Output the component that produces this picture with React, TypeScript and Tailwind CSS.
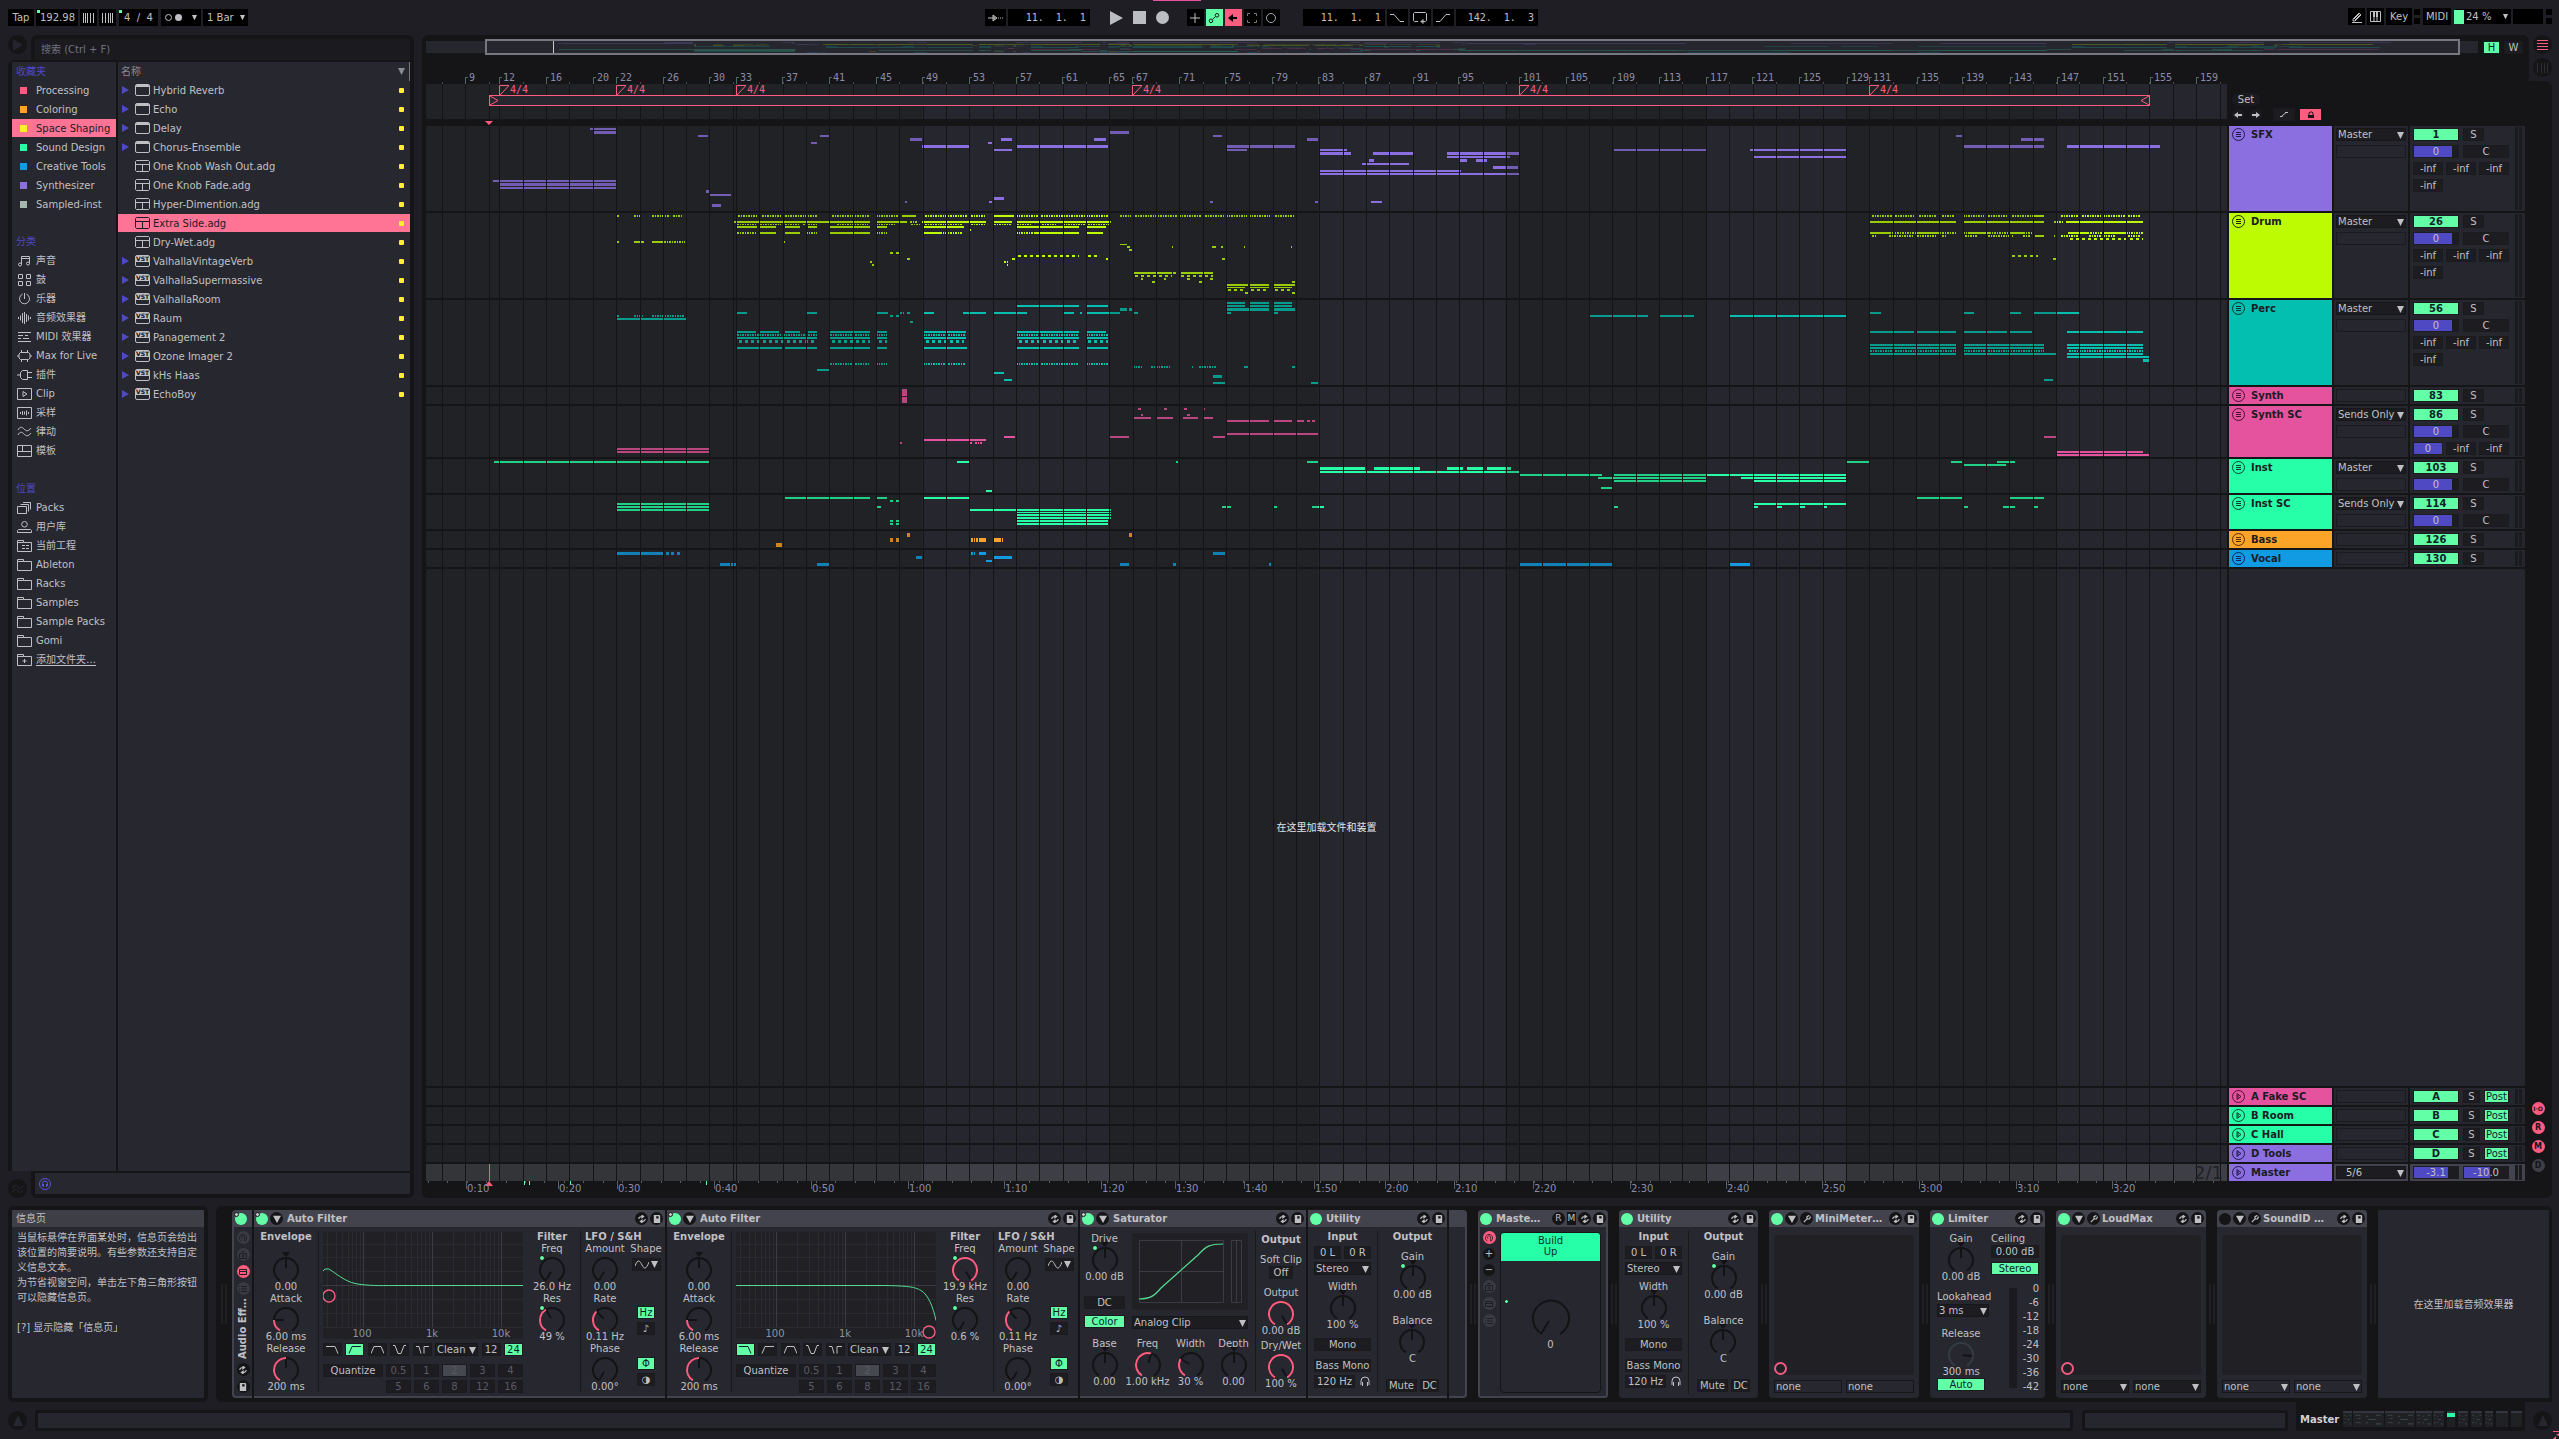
import { useState, type ReactNode } from 'react';
import { clsx } from 'clsx';

const LANE_W = 1801;

// clip positions are stored in timeline units, one lane pixel is 1.742 units
const px = (u: number) => Math.round(u / 1.742) - 6;
const pct = (x: number, total = LANE_W) => `${(x / total) * 100}%`;

// [y, height, clips in the first half, clips in the second half]
// "a-b" is a solid clip, "a~b" a dense run of hits, "a=b" a sparse run
type Row = [number, number, string, string?];

type Track = {
    name: string;
    num: string;
    color: string;
    ink: string;
    height: string;
    h: number;
    output?: string;
    sends?: string[];
    pan?: boolean;
    rows: Row[];
};

const tracks: Track[] = [
    {
        name: 'SFX', num: '1', color: '#8b6fe0', ink: '#1f1a4a', height: 'h-[85px]', h: 85, output: 'Master', pan: true,
        sends: ['-inf', '-inf', '-inf', '-inf'],
        rows: [
            [2, 2, '296-341'],
            [5, 3, '303-341 1200-1235'],
            [9, 2, '484-502 697-713 1382-1397', '1143-1153'],
            [12, 3, '854-875 1012-1031 1174-1195 1545-1565', '1256-1296'],
            [16, 2, '681-692 990-997'],
            [19, 3, '875-956 1038-1199 1404-1524', '1155-1296 1336-1498'],
            [23, 2, '998-1031 1404-1441', '33-82 547-707 784-951'],
            [26, 3, '', '33-89 127-196 256-382'],
            [30, 2, '', '256-366 789-951'],
            [33, 3, '', '120-129 277-291 307-326'],
            [37, 2, '', '108-190'],
            [40, 3, '', '336-380'],
            [44, 2, '', '33-280'],
            [47, 2, '', '33-382'],
            [54, 2, '127-341'],
            [57, 3, '138-341'],
            [61, 2, '138-341'],
            [64, 3, '498-504'],
            [68, 2, '505-542'],
            [71, 3, '998-1017'],
            [75, 2, '845-848 991-997 1376-1382 1559-1565', '124-143'],
            [78, 3, '509-524'],
        ],
    },
    {
        name: 'Drum', num: '26', color: '#bcfb02', ink: '#1d2a00', height: 'h-[85px]', h: 85, output: 'Master', pan: true,
        sends: ['-inf', '-inf', '-inf', '-inf'],
        rows: [
            [2, 2, '343-347 373~387 404~436 440~458 554~587 596~631 636~692 718~784 794~834 840-864 880~953 960~986 1000-1035 1038~1200 1220~1238 1246~1321 1322~1360 1367~1402 1404~1440 1444~1480 1490~1524', '996~1026 1028~1070 1078~1110 1118~1141 1155~1192 1199~1234 1240~1276 1277-1296 1326~1356 1362~1397 1399~1465'],
            [8, 2, '547-713 713-784 794-848 854~866 875-986 998-1031 1038-1204', '993-1143 1155-1296 1314~1331 1335-1469'],
            [11, 1, '552~587 592~628 636~660 668~692 726~780 794~830 855~872 880~946 960~985 1000~1031 1040~1064 1084~1110 1120~1200'],
            [13, 2, '552-587 592-620 636-662 676-692 714-784 794-814 876-948 1038-1148 1160-1195'],
            [16, 2, '958-960'],
            [19, 2, '552~585 592-620 636-662 672~692 714-784 794~814 876-905 905~946 1038~1070 1070-1148 1160-1190', '993-1030 1032~1075 1075-1110 1110~1143 1155~1165 1165-1200 1200~1235 1235-1260 1260~1276 1338-1375 1376~1397 1399-1438 1438~1469'],
            [22, 2, '', '996~1003 1026~1070 1075~1110 1119~1125 1158~1181 1198~1235 1240-1242 1260~1273 1281-1296 1314-1316 1326~1355 1374~1397 1399~1420 1442~1465'],
            [25, 2, '', '1341=1469'],
            [28, 2, '343-347 373-390 404-424 425~462 634-636'],
            [31, 1, '1220-1232'],
            [33, 2, '1232-1236 1310-1312 1380-1387 1396-1398 1436-1438 1517-1519'],
            [36, 2, '1235-1240'],
            [39, 2, '819=834'],
            [42, 2, '1042=1148 1164=1179', '1240=1286'],
            [45, 2, '848-854 1031-1037 1195-1199 1397-1402', '1312-1317'],
            [48, 2, '784-787 1017~1026'],
            [51, 2, '787-791 1022-1024'],
            [59, 2, '1242-1310 1312-1317 1326-1382'],
            [62, 2, '1246=1310 1326=1382'],
            [65, 2, '1256-1260 1296-1300 1336-1341 1376-1382'],
            [68, 2, '1275-1281 1357-1362 1519-1524'],
            [71, 2, '1404-1443 1444-1479 1486-1524'],
            [74, 1, '1404-1437 1444-1479 1486-1519'],
            [76, 2, '1408=1435 1448=1476 1490=1519'],
            [79, 2, '1437-1443 1519-1524'],
        ],
    },
    {
        name: 'Perc', num: '56', color: '#03bfaf', ink: '#04302c', height: 'h-[85px]', h: 85, output: 'Master', pan: true,
        sends: ['-inf', '-inf', '-inf', '-inf'],
        rows: [
            [2, 2, '1404-1437 1444-1479 1486-1519'],
            [5, 2, '1038-1148 1160-1199 1404-1437 1444-1479 1486-1519'],
            [8, 3, '1220-1232 1235-1240 1404-1479 1486-1524'],
            [12, 2, '552-570 672-692 794-816 836~843 848-854 876-896 946-986 1000-1058 1120-1139 1150-1153 1160-1220 1242-1251 1404-1413 1486-1495', '993-1012 1155-1174 1237-1256 1277-1357'],
            [15, 2, '343-347 373~390 404~460 819=834', '505-606 627-686 749-951'],
            [18, 2, '343-463'],
            [21, 2, '854=864'],
            [31, 2, '552-585 592-626 636-662 676-692 714-784 794-814 876-951 1038-1148 1160-1195', '993-1070 1075-1143 1155-1232 1237-1275 1336-1469'],
            [34, 2, '552~631 632~692 714~784 794~814 876~951 1038~1148 1160~1199'],
            [37, 2, '552-692 714-784 794-814 876-951 1038-1148 1160-1199'],
            [40, 3, '556=692 718=784 800=814 882=947 1043=1148 1164=1199'],
            [44, 2, '', '993-1143 1155-1296 1336-1469'],
            [47, 2, '552-631 636-692 714-784 794-814 876-953 1038-1148 1160-1199', '993-1143 1155-1296 1336-1469'],
            [50, 2, '', '993~1143 1155~1296 1340~1469'],
            [53, 2, '', '993-1143 1155-1317 1336-1469'],
            [56, 2, '', '1336-1479'],
            [59, 3, '', '1469-1479'],
            [63, 2, '714~784 794~814 876~951 1038~1148 1160~1199'],
            [66, 2, '1242~1260 1274~1306 1345-1347 1357~1386 1436-1443 1519-1524'],
            [69, 2, '692-713'],
            [72, 2, '998-1017'],
            [75, 3, '1382-1397'],
            [79, 2, '1017-1031', '1296-1312'],
            [82, 2, '1382-1402 1552-1565'],
        ],
    },
    {
        name: 'Synth', num: '83', color: '#e5539f', ink: '#4a1030', height: 'h-[17px]', h: 17,
        rows: [[2, 7, '840-848'], [10, 6, '840-848']],
    },
    {
        name: 'Synth SC', num: '86', color: '#e5539f', ink: '#4a1030', height: 'h-[51px]', h: 51, output: 'Sends Only', pan: true,
        sends: ['0', '-inf', '-inf'],
        rows: [
            [2, 2, '1251-1256 1296-1301 1331-1336 1364-1368'],
            [8, 2, '1256-1260 1336-1342'],
            [11, 2, '1242-1274 1282-1312 1329-1355 1364-1382'],
            [14, 2, '1404-1479 1486-1519 1526-1540 1545-1551 1553-1559'],
            [27, 2, '1404-1565'],
            [30, 2, '1017-1037 1200-1235 1382-1402', '1296-1317'],
            [33, 2, '876-986'],
            [36, 2, '836-840 958-962 966~981'],
            [42, 2, '343-504'],
            [45, 2, '343-504', '1319-1469'],
            [48, 2, '', '1319-1479'],
        ],
    },
    {
        name: 'Inst', num: '103', color: '#26ffa8', ink: '#06402a', height: 'h-[34px]', h: 34, output: 'Master', pan: true,
        rows: [
            [2, 2, '129-504 936-956 1317-1321 1545-1565', '953-991 1134-1153 1214-1246'],
            [5, 2, '', '1155-1230'],
            [8, 3, '', '33-113 129-209 256-284 291-319 326-368'],
            [12, 2, '', '33-382'],
            [15, 2, '', '383-526 547-951'],
            [18, 2, '', '519-707 768-951'],
            [21, 2, '', '547-707 789-951'],
            [28, 2, '', '524-545'],
            [31, 2, '986-997'],
        ],
    },
    {
        name: 'Inst SC', num: '114', color: '#26ffa8', ink: '#06402a', height: 'h-[34px]', h: 34, output: 'Sends Only', pan: true,
        rows: [
            [2, 2, '636-784 794-814 876-956', '1075-1153 1237-1296'],
            [5, 2, '819=834'],
            [8, 2, '343-504', '789-951'],
            [11, 2, '343-504 794-803 1397-1413 1486-1493 1554-1575', '547-554 789-798 831-840 871-880 911-918 1155-1164 1225-1246 1277-1286'],
            [14, 2, '343-504 958-1204'],
            [17, 1, '1038-1204'],
            [19, 2, '1038-1204'],
            [22, 2, '1038-1204'],
            [25, 2, '819=834 1038-1199'],
            [28, 2, '819=834 1038-1199'],
        ],
    },
    {
        name: 'Bass', num: '126', color: '#fba427', ink: '#5a2a10', height: 'h-[17px]', h: 17,
        rows: [[2, 4, '848-854 1235-1240'], [7, 4, '819=834 960~974 974-986 1000-1008 1009~1016'], [12, 4, '620-631']],
    },
    {
        name: 'Vocal', num: '130', color: '#119be3', ink: '#10205a', height: 'h-[17px]', h: 17,
        rows: [
            [2, 3, '343-424 429-433 437=453 960~969 974-986 1382-1402'],
            [6, 3, '864-875 998-1031'],
            [10, 2, '986-997'],
            [13, 3, '523-540 541-546 547-551 692-713 1220-1235 1312-1317 1479-1483', '383-545 749-784'],
        ],
    },
];

const returns = [
    { id: 'A', name: 'A Fake SC', color: '#e5539f', ink: '#4a1030' },
    { id: 'B', name: 'B Room', color: '#26ffa8', ink: '#06402a' },
    { id: 'C', name: 'C Hall', color: '#26ffa8', ink: '#06402a' },
    { id: 'D', name: 'D Tools', color: '#8b6fe0', ink: '#1f1a4a' },
];

// grid lines fall on every second bar, restarting at each time signature marker
const gridLines = [16, 39, 63, 73, 97, 120, 143, 167, 190, 214, 237, 260, 283, 307];
for (let i = 0; i <= 33; i++) gridLines.push(Math.round(310 + i * 23.33));
for (let i = 0; i <= 30; i++) gridLines.push(Math.round(1093 + i * 23.35));

const dimZones = [[0, 496], [683, 892], [1079, 1280], [1420, 1630]];

const barLabels: [number, string][] = [
    [79, '9'], [138, '12'], [220, '16'], [302, '20'], [342, '22'], [424, '26'], [504, '30'], [551, '33'], [631, '37'],
    [713, '41'], [794, '45'], [875, '49'], [957, '53'], [1038, '57'], [1119, '61'], [1200, '65'], [1241, '67'],
    [1322, '71'], [1403, '75'], [1485, '79'], [1565, '83'], [1647, '87'], [1729, '91'], [1809, '95'], [1915, '101'],
    [1997, '105'], [2079, '109'], [2159, '113'], [2241, '117'], [2321, '121'], [2403, '125'], [2485, '129'],
    [2525, '131'], [2607, '135'], [2687, '139'], [2769, '143'], [2851, '147'], [2931, '151'], [3013, '155'], [3093, '159'],
];

const signatures = [138, 342, 551, 1241, 1915, 2525];

const timeLabels: [number, string][] = [
    [40, '0:10'], [132, '0:20'], [191, '0:30'], [288, '0:40'], [385, '0:50'], [482, '1:00'], [578, '1:10'], [675, '1:20'],
    [749, '1:30'], [818, '1:40'], [888, '1:50'], [959, '2:00'], [1028, '2:10'], [1107, '2:20'], [1204, '2:30'],
    [1300, '2:40'], [1396, '2:50'], [1493, '3:00'], [1590, '3:10'], [1686, '3:20'],
];

const favourites = [
    ['Processing', '#ff5c80'], ['Coloring', '#fba427'], ['Space Shaping', '#ffef2e'], ['Sound Design', '#26ffa8'],
    ['Creative Tools', '#119be3'], ['Synthesizer', '#8b6fe0'], ['Sampled-inst', '#a4b8ae'],
];

const categories: [string, string][] = [
    ['声音', 'M4.5 9.5V1.5h8v7M4.5 3.5h8M4.5 9.5a1.5 1.5 0 1 1-3 0 1.5 1.5 0 0 1 3 0M12.5 8.5a1.5 1.5 0 1 1-3 0 1.5 1.5 0 0 1 3 0'],
    ['鼓', 'M1.5 .5h4v4h-4zM9.5 .5h4v4h-4zM1.5 7.5h4v4h-4zM9.5 7.5h4v4h-4z'],
    ['乐器', 'M5.5 1.2a5 5 0 1 0 4 0M7.5 0v6'],
    ['音频效果器', 'M1.5 5v2M3.5 3.5v5M5.5 1v10M7.5 0v12M9.5 2v8M11.5 3.5v5M13.5 5v2'],
    ['MIDI 效果器', 'M1 1.5h13M1 4.5h5M8 4.5h3M1 7.5h3M6 7.5h6M1 10.5h13'],
    ['Max for Live', 'M3.5 2.5h8l1.5 1.5v4l-1.5 1.5h-8L2 8V4zM4.5 0v2M10.5 0v2M4.5 10v2M10.5 10v2M0 6h2M13 6h2'],
    ['插件', 'M0 6h3M3.5 3.5l2-2h5v9h-5l-2-2zM11 3.5h4M11 8.5h4'],
    ['Clip', 'M.5 .5h14v11H.5zM6 3.5v5L10 6z'],
    ['采样', 'M.5 .5h14v11H.5zM3.5 5v2M5.5 4v4M7.5 4.5v3M9.5 3.5v5M11.5 5v2'],
    ['律动', 'M1 4c2-4 4-3 6-1s4 3 7-1M1 9c2-4 4-3 6-1s4 3 7-1'],
    ['模板', 'M.5 .5h14v11H.5zM.5 6.5h14M5.5 .5v6'],
];

const folder = 'M.5 11.5V.5h6v2h8v9zM.5 2.5h6';
const places: [string, string][] = [
    ['Packs', 'M.5 4.5h9v7h-9zM3.5 2.5h8v7M6 .5h7.5v7'],
    ['用户库', 'M7.5 .5a2.8 2.8 0 1 1 0 5.6 2.8 2.8 0 0 1 0-5.6M.5 11.5v-2l1-1h12l1 1v2z'],
    ['当前工程', folder + 'M5 5.5h3M9 5.5h3M5 8.5h3M9 8.5h3'],
    ['Ableton', folder],
    ['Racks', folder],
    ['Samples', folder],
    ['Sample Packs', folder],
    ['Gomi', folder],
    ['添加文件夹…', folder + 'M7.5 5v4M5.5 7h4'],
];

const files: [string, 'fx' | 'rack' | 'vst'][] = [
    ['Hybrid Reverb', 'fx'], ['Echo', 'fx'], ['Delay', 'fx'], ['Chorus-Ensemble', 'fx'],
    ['One Knob Wash Out.adg', 'rack'], ['One Knob Fade.adg', 'rack'], ['Hyper-Dimention.adg', 'rack'],
    ['Extra Side.adg', 'rack'], ['Dry-Wet.adg', 'rack'],
    ['ValhallaVintageVerb', 'vst'], ['ValhallaSupermassive', 'vst'], ['ValhallaRoom', 'vst'], ['Raum', 'vst'],
    ['Panagement 2', 'vst'], ['Ozone Imager 2', 'vst'], ['kHs Haas', 'vst'], ['EchoBoy', 'vst'],
];

function parseRow([y, h, head, tail = '']: Row) {
    const read = (text: string, from: number) =>
        text.split(' ').filter(Boolean).map(part => {
            const [, a, kind, b] = part.match(/(\d+)([-~=])(\d+)/)!;
            return { y, h, kind, x1: px(Number(a) + from), x2: px(Number(b) + from) };
        });
    return [...read(head, 0), ...read(tail, 1533)];
}

/* ---------- small shared pieces ---------- */

function Icon({ d, className = 'w-[15px] h-3', box = '0 0 15 12' }: { d: string; className?: string; box?: string }) {
    return (
        <svg viewBox={box} className={clsx('shrink-0', className)} fill="none" stroke="currentColor" strokeWidth="1">
            <path d={d} />
        </svg>
    );
}

function Down({ className }: { className?: string }) {
    return (
        <svg viewBox="0 0 7 7" className={clsx('size-[7px] shrink-0', className)} fill="currentColor">
            <path d="M0 0h7L3.5 7z" />
        </svg>
    );
}

function Pick({ label, value, options = [], className = '', arrow = true }: { label: string; value: string; options?: string[]; className?: string; arrow?: boolean }) {
    return (
        <div className={clsx('relative h-[13px] border border-[#17171b]', className || 'bg-[#1c1c21]')}>
            <select aria-label={label} defaultValue={value} className="block w-full h-full appearance-none bg-transparent pl-px leading-[11px] outline-none">
                {[value, ...options].map(o => <option key={o}>{o}</option>)}
            </select>
            {arrow && <Down className="absolute right-px top-[3px] pointer-events-none" />}
        </div>
    );
}

function Btn({ children, on, className, label }: { children?: ReactNode; on?: boolean; className?: string; label?: string }) {
    return (
        <button
            type="button"
            aria-label={label}
            className={clsx(
                'h-[13px] flex items-center justify-center leading-none whitespace-nowrap shrink-0 border border-[#1a1a1f]',
                on ? 'bg-[#62ffa6] text-[#0d1f2b]' : 'bg-[#1c1c21]',
                className,
            )}
        >
            {children}
        </button>
    );
}

function Knob({ label, value, at = 0, arc, center, mod, faded }: { label?: string; value: string; at?: number; arc?: boolean; center?: boolean; mod?: boolean; faded?: boolean }) {
    const pt = (deg: number, r: number) => {
        const a = ((deg - 90) * Math.PI) / 180;
        return `${(15 + Math.cos(a) * r).toFixed(2)} ${(15 + Math.sin(a) * r).toFixed(2)}`;
    };
    const ring = (from: number, to: number) => `M${pt(from, 12)}A12 12 0 ${to - from > 180 ? 1 : 0} 1 ${pt(to, 12)}`;
    return (
        <div className="h-[50px] flex flex-col items-center leading-3 whitespace-nowrap">
            <span className="h-3">{label}</span>
            <svg viewBox="0 0 30 26" className="w-[30px] h-[26px] overflow-visible" fill="none" strokeWidth="2">
                {center && <path d="M11-3h8l-4 5z" fill="#131316" />}
                <path d={ring(-150, 150)} stroke={faded ? '#353b42' : '#131316'} />
                {arc && at > -150 && <path d={ring(-150, at)} stroke="#ff5c80" />}
                <path d={`M${pt(at, 2)}L${pt(at, 11)}`} stroke="#131316" />
                {mod && <circle cx="5" cy="3" r="2.5" fill="#62ffa6" stroke="#131316" strokeWidth="1" />}
            </svg>
            <span className="h-3">{value}</span>
        </div>
    );
}

/* ---------- top bar ---------- */

function Cell({ children, className, tone = 'bg-black', label }: { children?: ReactNode; className?: string; tone?: string; label?: string }) {
    return (
        <button type="button" aria-label={label} className={clsx('h-[17px] flex items-center justify-center shrink-0 leading-none', tone, className)}>
            {children}
        </button>
    );
}

function Lights() {
    return (
        <div className="w-[6px] flex flex-col justify-between h-[15px] shrink-0">
            <span className="h-[6px] bg-black" />
            <span className="h-[6px] bg-black" />
        </div>
    );
}

function TopBar() {
    return (
        <header className="relative h-[35px] flex items-start pt-[9px] shrink-0">
            <div className="flex gap-[2px]">
                <Cell className="w-[26px]">Tap</Cell>
                <div className="relative">
                    <input aria-label="Tempo" defaultValue="192.98" className="w-[42px] h-[17px] bg-black pl-1" />
                    <span className="absolute left-px top-px size-[3px] bg-[#62ffa6]" />
                </div>
                <Cell className="w-[17px]" label="Nudge down"><Icon box="0 0 12 10" className="w-3 h-[10px]" d="M.5 0v10M2.5 0v10M4.5 0v10M7.5 0v10M10.5 0v10" /></Cell>
                <Cell className="w-[17px]" label="Nudge up"><Icon box="0 0 12 10" className="w-3 h-[10px]" d="M.5 0v10M3.5 0v10M6.5 0v10M8.5 0v10M10.5 0v10" /></Cell>
                <div className="relative">
                    <Cell className="w-[39px] ml-px">4&nbsp;&nbsp;/&nbsp;&nbsp;4</Cell>
                    <span className="absolute left-px top-px size-[3px] bg-[#62ffa6]" />
                </div>
                <Cell className="w-[40px] gap-[3px] ml-px" label="Metronome">
                    <span className="size-[7px] rounded-full border border-current" />
                    <span className="size-[7px] rounded-full bg-current" />
                    <Down className="scale-75 ml-[6px]" />
                </Cell>
                <div className="relative bg-black w-[45px] h-[17px]">
                    <select aria-label="Quantization" className="appearance-none w-full h-full bg-transparent pl-1 outline-none">
                        <option>1 Bar</option>
                    </select>
                    <Down className="absolute right-[2px] top-[5px] scale-75 pointer-events-none" />
                </div>
            </div>
            <div className="grow-[735]" />
            <div className="flex gap-[2px] items-center">
                <Cell className="w-[21px]" label="Follow"><Icon box="0 0 15 10" className="w-[15px] h-[10px]" d="M0 5h6M5 2l4 3-4 3zM6 3v4M7 4v2M10 5h1M12 5h1M14 5h1" /></Cell>
                <input aria-label="Position" defaultValue="11.  1.  1" className="w-[82px] h-[17px] bg-black text-right pr-1 font-['DejaVu_Sans_Mono',monospace]" />
                <div className="flex gap-[10px] pl-[18px] pr-4 text-[#bcbdc3]">
                    <button type="button" aria-label="Play"><svg viewBox="0 0 13 14" className="w-[13px] h-[14px] fill-current"><path d="M0 0l13 7-13 7z" /></svg></button>
                    <button type="button" aria-label="Stop" className="size-[13px] bg-current" />
                    <button type="button" aria-label="Record" className="size-[13px] rounded-full bg-current" />
                </div>
                <Cell className="w-[17px]" label="Overdub"><Icon box="0 0 10 10" className="size-[10px]" d="M5 0v10M0 5h10" /></Cell>
                <Cell className="w-[17px] text-[#0d1f1a]" tone="bg-[#62ffa6]" label="Automation arm"><Icon box="0 0 12 12" className="size-3" d="M3 7a1.8 1.8 0 1 1 0 3.6A1.8 1.8 0 0 1 3 7M9 1.5A1.8 1.8 0 1 1 9 5.1 1.8 1.8 0 0 1 9 1.5M4.5 7.5l3-3" /></Cell>
                <Cell className="w-[17px] text-black" tone="bg-[#ff5c80]" label="Back to arrangement"><svg viewBox="0 0 10 8" className="w-[10px] h-2 fill-current"><path d="M5 0v3h4v2H5v3L0 4z" /></svg></Cell>
                <Cell className="w-[17px] text-[#71797f]" label="Capture"><Icon box="0 0 10 10" className="size-[10px]" d="M.5 3V.5H3M7 .5h2.500V3M9.5 7v2.500H7M3 9.5H.5V7" /></Cell>
                <Cell className="w-[17px]" label="Session record"><span className="size-[10px] rounded-full border border-[#9ea6b4]" /></Cell>
                <input aria-label="Loop start" defaultValue="11.  1.  1" className="w-[82px] h-[17px] bg-black text-right pr-1 ml-[21px] font-['DejaVu_Sans_Mono',monospace]" />
                <Cell className="w-[21px]" label="Punch in"><Icon box="0 0 14 10" className="w-[14px] h-[10px]" d="M0 1.5h4l6 7h4" /></Cell>
                <Cell className="w-[21px]" label="Loop"><Icon box="0 0 14 12" className="w-[14px] h-3" d="M5 9.5H1.5l-1-1v-7l1-1h11l1 1v7l-1 1H8M10 7.5l-2 2 2 2z" /></Cell>
                <Cell className="w-[21px]" label="Punch out"><Icon box="0 0 14 10" className="w-[14px] h-[10px]" d="M0 8.5h4l6-7h4" /></Cell>
                <input aria-label="Loop length" defaultValue="142.  1.  3" className="w-[82px] h-[17px] bg-black text-right pr-1 font-['DejaVu_Sans_Mono',monospace]" />
            </div>
            <div className="grow-[808]" />
            <div className="flex gap-[2px] items-center -mt-px">
                <Cell className="w-[17px]" label="Draw mode"><Icon box="0 0 12 12" className="size-3" d="M1 11.5h10M2 8l6-6 2 2-6 6H2zM3 8l5-5M4 9l5-5" /></Cell>
                <Cell className="w-[17px]" label="Computer keyboard"><Icon box="0 0 11 11" className="size-[11px]" d="M.5 .5h10v10H.5zM4 6v5M7 6v5M3.5 0v6M4.5 0v6M6.5 0v6M7.5 0v6" /></Cell>
                <Cell className="w-[26px]">Key</Cell>
                <Lights />
                <Cell className="w-[28px] ml-px">MIDI</Cell>
                <div className="relative w-[57px] h-[15px] bg-black flex items-center gap-[2px] ml-px">
                    <span className="w-[10px] h-[14px] bg-[#62ffa6]" />24 %
                    <Down className="absolute right-[2px] top-1 scale-75" />
                </div>
                <span className="w-[30px] h-[15px] bg-black mr-px" />
                <Lights />
            </div>
            <span className="absolute left-[45%] top-0 w-12 h-px bg-[#e5539f]" />
        </header>
    );
}

/* ---------- browser ---------- */

function RoundButton({ label, children, className = 'size-[19px]', tone = 'bg-[#151518]', round = 'rounded-full' }: { label: string; children?: ReactNode; className?: string; tone?: string; round?: string }) {
    return (
        <button type="button" aria-label={label} className={clsx('flex items-center justify-center shrink-0 leading-none', round, tone, className)}>
            {children}
        </button>
    );
}

function FileIcon({ kind }: { kind: 'fx' | 'rack' | 'vst' }) {
    if (kind === 'rack') return <Icon d="M1.5 .5h12l1 1v9l-1 1h-12l-1-1v-9zM.5 4.5h14M7.5 4.5v7" />;
    return (
        <span className="w-[15px] h-3 rounded-[2px] border border-current shrink-0 overflow-hidden">
            <span className={clsx('block bg-current', kind === 'vst' ? 'h-[6px]' : 'h-[2px]')}>
                {kind === 'vst' && <span className="block text-[6px] leading-[6px] font-bold text-[#15151a] text-center">VST</span>}
            </span>
        </span>
    );
}

function Browser() {
    const [group, setGroup] = useState('Space Shaping');
    const [file, setFile] = useState('Extra Side.adg');
    return (
        <aside className="w-[406px] shrink-0 flex flex-col">
            <div className="flex gap-1">
                <RoundButton label="Preview"><svg viewBox="0 0 10 12" className="w-[10px] h-3 fill-[#25252d]"><path d="M0 0l10 6-10 6z" /></svg></RoundButton>
                <div className="flex-1 bg-[#151518] rounded-t-md pt-1 pl-1 pr-1 h-[25px]">
                    <input type="search" aria-label="搜索" placeholder="搜索 (Ctrl + F)" className="block w-full h-[21px] bg-[#1b1b1f] pl-[6px] placeholder:text-[#71717d] outline-none" />
                </div>
            </div>
            <div className="flex-1 bg-[#151518] rounded-tl-md pt-[2px] px-1 flex gap-[2px]">
                <nav className="w-[104px] bg-[#27272f] pb-1">
                    <h2 className="h-[19px] pl-1 leading-[19px] text-[#4f49c4]">收藏夹</h2>
                    {favourites.map(([name, color]) => (
                        <button
                            key={name}
                            type="button"
                            onClick={() => setGroup(name)}
                            className={clsx('h-[18px] mb-px w-full flex items-center gap-[9px] pl-2 whitespace-nowrap', group === name && 'bg-[#ff7494] text-[#1c1a24]')}
                        >
                            <span className="size-[7px]" style={{ backgroundColor: color }} />
                            {name}
                        </button>
                    ))}
                    <h2 className="h-[19px] mt-[19px] pl-1 leading-[19px] text-[#4f49c4]">分类</h2>
                    {categories.map(([name, d]) => (
                        <button key={name} type="button" className="h-[19px] w-full flex items-center gap-1 pl-[5px] whitespace-nowrap"><Icon d={d} />{name}</button>
                    ))}
                    <h2 className="h-[19px] mt-[19px] pl-1 leading-[19px] text-[#4f49c4]">位置</h2>
                    {places.map(([name, d]) => (
                        <button key={name} type="button" className="h-[19px] w-full flex items-center gap-1 pl-[5px] whitespace-nowrap">
                            <Icon d={d} /><span className={clsx(name.startsWith('添加') && 'underline underline-offset-2')}>{name}</span>
                        </button>
                    ))}
                </nav>
                <div className="flex-1 bg-[#27272f]">
                    <div className="h-[19px] flex items-center justify-between pl-[3px] pr-1 border-r border-[#777782] text-[#8a8a94]">
                        名称<Down />
                    </div>
                    {files.map(([name, kind]) => (
                        <button
                            key={name}
                            type="button"
                            onClick={() => setFile(name)}
                            className={clsx('h-[18px] mb-px w-full flex items-center pl-1 pr-[6px] whitespace-nowrap', file === name && 'bg-[#ff7494] text-[#1c1a24]')}
                        >
                            <svg viewBox="0 0 7 8" className={clsx('w-[7px] h-2 mr-[6px] fill-[#4f49c4]', kind === 'rack' && 'invisible')}><path d="M0 0l7 4-7 4z" /></svg>
                            <FileIcon kind={kind} />
                            <span className="ml-[3px] flex-1 text-left">{name}</span>
                            <span className="size-[5px] rounded-[1px] bg-[#ffef2e]" />
                        </button>
                    ))}
                </div>
            </div>
            <div className="flex gap-1 h-[27px] shrink-0">
                <div className="w-[19px] flex items-end">
                    <RoundButton label="Groove pool"><Icon box="0 0 12 10" className="w-3 h-[10px] text-[#2c2c35]" d="M1 4c2-4 4-3 5-1s3 2 5-1M1 8c2-4 4-3 5-1s3 2 5-1" /></RoundButton>
                </div>
                <div className="flex-1 bg-[#151518] rounded-b-md pt-[2px] px-1 pb-1">
                    <div className="h-[21px] bg-[#27272f] flex items-center pl-1">
                        <button type="button" aria-label="Headphones" className="text-[#5a54e0]">
                            <Icon box="0 0 12 12" className="size-3" d="M6 .5a5.5 5.5 0 1 1 0 11 5.5 5.5 0 0 1 0-11M3.5 8V5.5a2.5 2.5 0 0 1 5 0V8M4.5 6v3M7.5 6v3" />
                        </button>
                    </div>
                </div>
            </div>
        </aside>
    );
}

/* ---------- arrangement ---------- */

function Lane({ h = 10, rows = [], color, base = '#26262e' }: { h?: number; rows?: Row[]; color?: string; base?: string }) {
    return (
        <svg viewBox={`0 0 ${LANE_W} ${h}`} preserveAspectRatio="none" shapeRendering="crispEdges" className="block w-full h-full">
            <rect width={LANE_W} height={h} fill={base} />
            {rows.flatMap(parseRow).map((c, i) =>
                c.kind === '-' ? (
                    <rect key={i} x={c.x1} y={c.y} width={Math.max(1, c.x2 - c.x1)} height={c.h} fill={color} />
                ) : (
                    <line key={i} x1={c.x1} x2={c.x2} y1={c.y + c.h / 2} y2={c.y + c.h / 2} stroke={color} strokeWidth={c.h} strokeDasharray={c.kind === '~' ? '2 1 1 1' : '3 3'} />
                ),
            )}
            {dimZones.map(([a, b]) => <rect key={a} x={a} width={b - a} height={h} fill="#0d1206" opacity="0.2" />)}
            {gridLines.map(x => <rect key={x} x={x} width="1" height={h} fill="#141417" />)}
        </svg>
    );
}

function Overview() {
    let top = 0;
    const marks = tracks.flatMap(t => {
        const at = top;
        top += t.h + 2;
        return t.rows.flatMap(parseRow).map(c => ({ ...c, color: t.color, y: Math.round((at + c.y) / 45) }));
    });
    return (
        <div className="flex h-3">
            <div className="relative flex-1 bg-[#26262e]">
                <svg viewBox="0 0 2052 12" preserveAspectRatio="none" shapeRendering="crispEdges" className="block w-full h-full opacity-25">
                    {marks.map((m, i) => (
                        <rect key={i} x={Math.round(m.x1 * 1.1 + 58)} y={m.y + 1} width={Math.max(1, Math.round((m.x2 - m.x1) * 1.1))} height="1" fill={m.color} opacity={m.kind === '-' ? 0.7 : 0.4} />
                    ))}
                </svg>
                <div className="absolute -top-[2px] -bottom-[2px] border-2 border-[#777782]" style={{ left: pct(59, 2052), right: pct(18, 2052) }} />
                <div className="absolute inset-y-0 w-px bg-[#c8c8cc]" style={{ left: pct(127, 2052) }} />
            </div>
            <Btn on className="ml-[5px] w-[17px] h-3">H</Btn>
            <Btn className="ml-1 w-[19px] h-3 mr-[2px]">W</Btn>
        </div>
    );
}

function Ruler() {
    return (
        <div className="flex gap-[2px] h-[31px]">
            <div className="relative flex-1 text-[#8b8ba8] font-['DejaVu_Sans_Mono',monospace]">
                {gridLines.map(x => <span key={x} className="absolute bottom-0 w-px h-[2px] bg-[#4a4a55]" style={{ left: pct(x) }} />)}
                {barLabels.map(([u, text]) => (
                    <span key={text} className="absolute bottom-0 h-[13px] pl-1 leading-[13px]" style={{ left: pct(px(u)) }}>
                        <span className="absolute left-0 bottom-0 w-[3px] h-[7px] border-l border-t border-[#4c6a60]" />
                        {text}
                    </span>
                ))}
            </div>
            <div className="w-[296px] shrink-0" />
        </div>
    );
}

function Scrub() {
    return (
        <div className="flex gap-[2px] h-[42px]">
            <div className="relative flex-1 h-[35px]">
                <Lane h={35} />
                <div className="absolute top-[11px] h-[11px] border border-[#ff5c80] bg-[#27272f] flex justify-between items-center text-[#ff5c80]" style={{ left: pct(63), right: pct(77) }}>
                    <Icon box="0 0 8 9" className="w-2 h-[9px]" d="M0 0l8 4.500L0 9" />
                    <Icon box="0 0 8 9" className="w-2 h-[9px]" d="M8 0L0 4.500 8 9" />
                </div>
                {signatures.map(u => (
                    <span key={u} className="absolute top-0 h-[11px] flex gap-px items-center text-[#ff5c80] leading-none font-['DejaVu_Sans_Mono',monospace]" style={{ left: pct(px(u)) }}>
                        <Icon box="0 0 10 10" className="size-[10px]" d="M.5 10V.5H10L1 10" />4/4
                    </span>
                ))}
                <svg viewBox="0 0 8 4" className="absolute -bottom-[6px] w-2 h-1 -ml-1 fill-[#ff5c80]" style={{ left: pct(63) }}><path d="M0 0h8L4 4z" /></svg>
            </div>
            <div className="w-[296px] shrink-0 pl-[3px] pt-[9px]">
                <button type="button" className="block h-[13px] w-[28px] rounded-full bg-[#1b1b1f] leading-[13px]">Set</button>
                <div className="flex items-center mt-[2px]">
                    <RoundButton label="Previous locator" className="w-3 h-[11px]" tone="bg-[#1b1b1f]"><svg viewBox="0 0 8 6" className="w-2 h-[6px] fill-current"><path d="M4 0v2h4v2H4v2L0 3z" /></svg></RoundButton>
                    <RoundButton label="Next locator" className="w-3 h-[11px] ml-[6px]" tone="bg-[#1b1b1f]"><svg viewBox="0 0 8 6" className="w-2 h-[6px] fill-current"><path d="M4 0v2H0v2h4v2l4-3z" /></svg></RoundButton>
                    <Btn label="Automation mode" className="w-[22px] h-[11px] ml-[11px]"><Icon box="0 0 8 7" className="w-2 h-[7px]" d="M0 5.5h2.500M1.5 5.5L6 1.5M5 1.5h3" /></Btn>
                    <button type="button" aria-label="Lock envelopes" className="w-[21px] h-[11px] ml-[5px] bg-[#ff5c80] flex items-center justify-center text-[#17171b]">
                        <Icon box="0 0 8 8" className="size-2" d="M2 4V2l1-1h2l1 1v2M1 4.5h6M1 5.5h6M1 6.5h6" />
                    </button>
                </div>
            </div>
        </div>
    );
}

function Meter() {
    return (
        <div className="absolute right-[3px] inset-y-px w-[7px] flex gap-px">
            <span className="flex-1 bg-[#1b1b1f]" /><span className="flex-1 bg-[#1b1b1f]" />
        </div>
    );
}

function TrackName({ name, color, ink, play }: { name: string; color: string; ink: string; play?: boolean }) {
    return (
        <div className="w-[103px] pl-[3px] pt-px flex gap-[6px] items-start" style={{ backgroundColor: color, color: ink }}>
            <Icon box="0 0 13 13" className="size-[13px] mt-px" d={'M6.5 .5a6 6 0 1 1 0 12 6 6 0 0 1 0-12' + (play ? 'M5 3.5v6l4-3zM6 5v3' : 'M4 4.5h5M4 6.5h5M4 8.5h5')} />
            <span className="font-bold leading-[15px] text-[#1b1b24] whitespace-nowrap">{name}</span>
        </div>
    );
}

function Level({ value, className = 'w-[46px]', fill = 'w-[38px]' }: { value: string; className?: string; fill?: string }) {
    return (
        <button type="button" className={clsx('relative h-[13px] bg-[#1c1c21] shrink-0', className)}>
            <span className={clsx('absolute left-px inset-y-px bg-[#4f49c4]', fill)} />
            <span className="relative block leading-[13px]">{value}</span>
        </button>
    );
}

function TrackRow({ track: t }: { track: Track }) {
    return (
        <div className={clsx('flex gap-[2px] shrink-0', t.height)}>
            <div className="flex-1 min-w-0"><Lane h={t.h} rows={t.rows} color={t.color} /></div>
            <div className="flex gap-[2px] shrink-0">
                <TrackName name={t.name} color={t.color} ink={t.ink} />
                <div className="w-[74px] bg-[#26262e] px-[2px] pt-[2px] flex flex-col gap-1">
                    {t.output && <Pick label={`${t.name} output`} value={t.output} />}
                    <div className="h-[13px] border border-[#1b1b1f]" />
                </div>
                <div className="relative w-[115px] bg-[#26262e] pl-[3px] pt-[2px] flex flex-col gap-1">
                    <div className="flex gap-1"><Btn on className="w-[46px] font-bold">{t.num}</Btn><Btn className="w-[21px]">S</Btn></div>
                    {t.pan && <div className="flex gap-1"><Level value="0" /><Btn className="w-[46px]">C</Btn></div>}
                    {t.sends && (
                        <div className="flex flex-wrap gap-x-[3px] gap-y-1 w-[96px]">
                            {t.sends.map((s, i) => s === '0'
                                ? <Level key={i} value="0" className="w-[30px]" fill="w-[28px]" />
                                : <Btn key={i} className="w-[30px]">{s}</Btn>)}
                        </div>
                    )}
                    <Meter />
                </div>
            </div>
        </div>
    );
}

function TimeRuler() {
    return (
        <div className="flex h-[17px] shrink-0">
            <div className="relative flex-1 mr-[298px] text-[#8b8ba8]">
                {Array.from({ length: 93 }, (_, i) => <span key={i} className="absolute top-0 w-px h-[2px] bg-[#5b5b66]" style={{ left: pct(2 + i * 19.4) }} />)}
                {[98, 103, 144, 280].map(x => <span key={x} className="absolute top-0 w-px h-1 bg-[#62ffa6]" style={{ left: pct(x) }} />)}
                {timeLabels.map(([x, text]) => (
                    <span key={text} className="absolute top-0 h-[11px] pl-px pt-[2px] leading-[12px]" style={{ left: pct(x) }}>
                        <span className="absolute left-0 top-0 w-px h-2 bg-[#5b5b66]" />
                        {text}
                    </span>
                ))}
            </div>
        </div>
    );
}

function Arrangement() {
    return (
        <main className="flex-1 min-w-0 flex">
            <div className="flex-1 min-w-0 bg-[#151518] rounded-l-md rounded-tr-md pl-1 pr-1 pt-[6px] flex flex-col">
                <Overview />
                <Ruler />
                <Scrub />
                <div className="flex-1 flex flex-col gap-[2px]">
                    {tracks.map(t => <TrackRow key={t.name} track={t} />)}
                    <div className="flex-1 flex gap-[2px]">
                        <div className="relative flex-1 min-w-0">
                            <div className="absolute inset-0"><Lane /></div>
                            <p className="absolute inset-0 flex items-center justify-center text-[#e4e4e8]">在这里加载文件和装置</p>
                        </div>
                        <div className="w-[296px] bg-[#26262e]" />
                    </div>
                    {returns.map(r => (
                        <div key={r.id} className="flex gap-[2px] h-[17px] shrink-0">
                            <div className="flex-1 min-w-0"><Lane /></div>
                            <div className="flex gap-[2px] shrink-0">
                                <TrackName name={r.name} color={r.color} ink={r.ink} play />
                                <div className="w-[74px] bg-[#26262e] px-[2px] pt-[2px]"><div className="h-[13px] border border-[#1b1b1f]" /></div>
                                <div className="relative w-[115px] bg-[#26262e] pl-[3px] pt-[2px] flex gap-1">
                                    <Btn on className="w-[46px] font-bold">{r.id}</Btn><Btn className="w-[17px]">S</Btn><Btn on className="w-[25px]">Post</Btn>
                                    <Meter />
                                </div>
                            </div>
                        </div>
                    ))}
                    <div className="flex gap-[2px] h-[17px] shrink-0">
                        <div className="relative flex-1 min-w-0">
                            <Lane base="#3e3e47" />
                            <span className="absolute right-1 top-0 text-lg leading-[17px] text-[#202125]">2/1</span>
                            <span className="absolute inset-y-0 w-px bg-[#ff5c80]" style={{ left: pct(63) }} />
                            <svg viewBox="0 0 8 5" className="absolute -bottom-[5px] w-2 h-[5px] -ml-1 fill-[#ff5c80]" style={{ left: pct(63) }}><path d="M0 5h8L4 0z" /></svg>
                        </div>
                        <div className="flex gap-[2px] shrink-0">
                            <TrackName name="Master" color="#8b6fe0" ink="#1f1a4a" play />
                            <div className="w-[74px] bg-[#43434d] px-[2px] pt-[2px]"><Pick label="Master output" value="5/6" className="bg-[#1c1c21] pl-2" /></div>
                            <div className="relative w-[115px] bg-[#43434d] pl-[3px] pt-[2px] flex gap-1">
                                <Level value="-3.1" fill="w-[34px]" /><Level value="-10.0" fill="w-[26px]" />
                                <Meter />
                            </div>
                        </div>
                    </div>
                </div>
                <TimeRuler />
            </div>
            <div className="w-[23px] shrink-0 flex flex-col">
                <div className="h-[46px] flex flex-col gap-1 items-end">
                    <RoundButton label="Arrangement view"><Icon box="0 0 11 10" className="w-[11px] h-[10px] text-[#ff5c80]" d="M0 .5h11M0 3.5h11M0 6.5h11M0 9.5h11" /></RoundButton>
                    <RoundButton label="Session view"><Icon box="0 0 11 10" className="w-[11px] h-[10px] text-[#2c2c35]" d="M.5 0v10M4.5 0v10M7.5 0v10M10.5 0v10" /></RoundButton>
                </div>
                <div className="flex-1 bg-[#151518] rounded-tr-md rounded-br-md flex flex-col justify-end items-center gap-[6px] pb-[26px] pr-[5px] text-[8px] font-bold text-[#15151a]">
                    {['I·O', 'R', 'M', 'D'].map(s => (
                        <button key={s} type="button" className={clsx('size-[13px] rounded-full leading-none', s === 'D' ? 'bg-[#3e3e47]' : 'bg-[#ff5c80]', s === 'I·O' && 'text-[6px]')}>{s}</button>
                    ))}
                </div>
            </div>
        </main>
    );
}

/* ---------- devices ---------- */

const swap = 'M1 5a4 3 0 0 1 5-3M5 .5l2 1.500-2 1.500zM9 5a4 3 0 0 1-5 3M5 6.500L3 8l2 1.500z';
const save = 'M1 0h7l1 1v9H1zM4 1.500v3h3v-3z';
const macros = 'M3 9a4.500 4.500 0 1 1 4 0V5a2 2 0 1 0-3 1';
const variations = 'M.5 2.500h7v5h-7zM2.500 .5h3M4 3.500v3M2.500 5h3';
const devicesIcon = 'M.5 1.500h7v5h-7zM.5 3.500h7';
const chains = 'M0 1.500h1M2 1.500h6M0 4h1M2 4h6M0 6.500h1M2 6.500h6';

function HeadButton({ label, d, box = '0 0 10 10', filled }: { label: string; d: string; box?: string; filled?: boolean }) {
    return (
        <RoundButton label={label} className="size-[13px]">
            <svg viewBox={box} className="size-2" fill={filled ? 'currentColor' : 'none'} fillRule="evenodd" stroke="currentColor" strokeWidth={filled ? 0 : 1.5}><path d={d} /></svg>
        </RoundButton>
    );
}

function Device({ title, width, children, off, mod, fold, wrench, racked, extra }: { title: string; width: string; children: ReactNode; off?: boolean; mod?: boolean; fold?: boolean; wrench?: boolean; racked?: boolean; extra?: ReactNode }) {
    return (
        <section className={clsx('shrink-0 h-[188px] flex flex-col bg-[#27272f] overflow-hidden', width, racked ? 'border-b-2 border-[#43434d]' : 'rounded-[4px]')}>
            <div className="h-[17px] shrink-0 bg-[#43434d] flex items-center gap-[2px] px-[2px]">
                <button type="button" aria-label={`${title} on`} className={clsx('relative size-3 rounded-full shrink-0', off ? 'bg-[#151518]' : 'bg-[#62ffa6]')}>
                    {mod && <span className="absolute -left-px -top-px size-[5px] rounded-full bg-[#c8c8cc] border border-[#151518]" />}
                </button>
                {fold && <HeadButton label="Fold" d="M0 1h10L5 10z" filled />}
                {wrench && <HeadButton label="Show plug-in" d="M1 9l5-5M5 4.500V2l3-1.500M5.500 5H8l1.500-3" />}
                <h3 className={clsx('flex-1 font-bold whitespace-nowrap', !wrench && 'pl-[2px]')}>{title}</h3>
                {extra}
                <HeadButton label="Hot-swap" d={swap} />
                <HeadButton label="Save preset" d={save} filled />
            </div>
            <div className="flex-1 flex">{children}</div>
        </section>
    );
}

function Heading({ children }: { children: ReactNode }) {
    return <h4 className="font-bold leading-3 text-center whitespace-nowrap">{children}</h4>;
}

const filterShapes = ['M0 2.500h9l3 7', 'M1 9.500l3-7h9', 'M0 9.500l3-7h7l3 7', 'M0 1.500h2l3 8h3l3-8h2', 'M0 2.500h3l2 7M8 9.500v-7h5'];

function AutoFilter({ curve, ring, shape, freq, res, freqAt, resAt }: { curve: string; ring: [number, number]; shape: number; freq: string; res: string; freqAt: number; resAt: number }) {
    const minor = [1, 2, 3].flatMap(d => [1, 2, 3, 4, 5, 6, 7, 8, 9].map(n => Math.round(-29 + 69 * (d - 1) + 69 * Math.log10(n)))).filter(x => x > 0 && x < 178).concat(178);
    return (
        <Device title="Auto Filter" width="w-[411px]" mod fold racked>
            <div className="w-[64px] pt-1 flex flex-col items-center">
                <Heading>Envelope</Heading>
                <Knob value="0.00" center />
                <Knob label="Attack" value="6.00 ms" at={-90} arc />
                <Knob label="Release" value="200 ms" at={0} arc />
            </div>
            <span className="w-px my-1 bg-[#18181b]" />
            <div className="w-[205px] pl-1 pt-[5px]">
                <svg viewBox="0 0 200 107" className="block w-[200px] h-[107px] rounded-[3px] bg-[#202025]" fill="none">
                    {minor.map(x => <path key={x} d={`M${x}.5 0v95`} stroke="#2a2a31" />)}
                    {[12, 25, 39, 67, 81, 95].map(y => <path key={y} d={`M0 ${y}.5h200`} stroke="#2a2a31" />)}
                    {[40, 109, 178].map(x => <path key={x} d={`M${x}.5 0v95`} stroke="#3b3b43" />)}
                    <path d="M0 53.500h200" stroke="#3b3b43" />
                    <path d={curve} stroke="#53dc92" />
                    <g fill="#8b93a5" textAnchor="middle"><text x="39" y="105">100</text><text x="109" y="105">1k</text><text x="178" y="105">10k</text></g>
                    <circle cx={ring[0]} cy={ring[1]} r="6" stroke="#f05a80" strokeWidth="1.5" />
                </svg>
                <div className="flex justify-between w-[200px] mt-1">
                    {filterShapes.map((d, i) => <Btn key={d} on={i === shape} label="Filter type" className="w-[19px]"><Icon box="0 0 13 11" className="w-[13px] h-[11px]" d={d} /></Btn>)}
                    <Pick label="Circuit" value="Clean" className="bg-[#1c1c21] w-[43px]" />
                    <Btn className="w-[19px]">12</Btn>
                    <Btn on className="w-[19px]">24</Btn>
                </div>
                <div className="grid grid-cols-[60px_repeat(5,25px)] gap-[3px] mt-2 text-[#5b5b66]">
                    <Btn className="text-[#c0c0c4]">Quantize</Btn>
                    {['0.5', '1', '2', '3', '4'].map(n => <Btn key={n} className={clsx(n === '2' && 'bg-[#46484f]')}>{n}</Btn>)}
                    <span />
                    {['5', '6', '8', '12', '16'].map(n => <Btn key={n}>{n}</Btn>)}
                </div>
            </div>
            <div className="w-[56px] pt-1">
                <Heading>Filter</Heading>
                <Knob label="Freq" value={freq} at={freqAt} arc mod />
                <Knob label="Res" value={res} at={resAt} arc mod />
            </div>
            <span className="w-px my-1 bg-[#18181b]" />
            <div className="flex-1 pt-1 pl-[2px]">
                <h4 className="font-bold leading-3 pl-[2px]">LFO / S&amp;H</h4>
                <div className="flex">
                    <div className="w-[44px]">
                        <Knob label="Amount" value="0.00" at={-150} />
                        <Knob label="Rate" value="0.11 Hz" at={-45} arc />
                        <Knob label="Phase" value="0.00°" at={-150} />
                    </div>
                    <div className="flex-1 flex flex-col items-center">
                        <span className="leading-3">Shape</span>
                        <Btn label="Shape" className="w-[29px] gap-[2px] mt-[3px]"><Icon box="0 0 14 9" className="w-[14px] h-[9px]" d="M0 6c3-8 5-5 7-1s4 5 7-3" /><Down /></Btn>
                        <Btn on className="w-[18px] mt-[35px]">Hz</Btn>
                        <Btn className="w-[18px] mt-[3px]">♪</Btn>
                        <Btn on className="w-[18px] mt-[22px]">Φ</Btn>
                        <Btn className="w-[18px] mt-[3px]">◑</Btn>
                    </div>
                </div>
            </div>
        </Device>
    );
}

function Saturator() {
    return (
        <Device title="Saturator" width="w-[226px]" mod fold racked>
            <div className="w-[175px] pt-[6px]">
                <div className="flex gap-[7px] pl-1">
                    <div className="w-[41px]">
                        <Knob label="Drive" value="0.00 dB" center mod />
                        <Btn className="w-full mt-[13px]">DC</Btn>
                        <Btn on className="w-full mt-[6px]">Color</Btn>
                    </div>
                    <div className="w-[116px]">
                        <svg viewBox="0 0 116 77" className="block w-[116px] h-[77px] rounded-[3px] bg-[#202025]" fill="none">
                            <path d="M7.500 7.500h84v62h-84zM49.500 7.500v62M7.500 38.500h84M99.500 7.500h10v62h-10zM104.500 7.500v62" stroke="#3b3b43" />
                            <path d="M7 66c12 0 16-4 22-11L66 22c8-9 12-11 25-11" stroke="#53dc92" strokeWidth="1.2" />
                        </svg>
                        <Pick label="Curve" value="Analog Clip" className="bg-[#1c1c21] mt-[6px]" />
                    </div>
                </div>
                <div className="flex pt-[9px] pl-[3px]">
                    <div className="w-[43px]"><Knob label="Base" value="0.00" center /></div>
                    <div className="w-[43px]"><Knob label="Freq" value="1.00 kHz" arc at={15} /></div>
                    <div className="w-[43px]"><Knob label="Width" value="30 %" arc at={-60} /></div>
                    <div className="w-[43px]"><Knob label="Depth" value="0.00" center /></div>
                </div>
            </div>
            <span className="w-px my-1 bg-[#18181b]" />
            <div className="flex-1 pt-[7px] flex flex-col items-center">
                <Heading>Output</Heading>
                <span className="leading-3 mt-2 whitespace-nowrap">Soft Clip</span>
                <Btn className="w-6">Off</Btn>
                <div className="mt-2"><Knob label="Output" value="0.00 dB" arc at={150} /></div>
                <div className="mt-[3px]"><Knob label="Dry/Wet" value="100 %" arc at={150} /></div>
            </div>
        </Device>
    );
}

function Utility({ racked }: { racked?: boolean }) {
    return (
        <Device title="Utility" width="w-[139px]" racked={racked}>
            <div className="w-[69px] pt-1 px-[6px]">
                <Heading>Input</Heading>
                <div className="flex gap-[3px] mt-[3px]"><Btn className="w-[27px]">0 L</Btn><Btn className="w-[27px]">0 R</Btn></div>
                <Pick label="Channel mode" value="Stereo" className="bg-[#1c1c21] mt-[3px] mb-[6px]" />
                <Knob label="Width" value="100 %" center />
                <Btn className="w-full mt-[7px]">Mono</Btn>
                <Btn className="w-full mt-2">Bass Mono</Btn>
                <div className="flex gap-1 mt-[3px]">
                    <Btn className="w-[41px]">120 Hz</Btn>
                    <Icon box="0 0 12 12" className="size-3" d="M2 10V6a4 4 0 0 1 8 0v4M3.5 7v4M8.5 7v4" />
                </div>
            </div>
            <span className="w-px my-1 bg-[#18181b]" />
            <div className="flex-1 pt-1 flex flex-col items-center">
                <Heading>Output</Heading>
                <div className="mt-2"><Knob label="Gain" value="0.00 dB" center mod /></div>
                <div className="mt-[14px]"><Knob label="Balance" value="C" center /></div>
                <div className="flex gap-[3px] mt-[14px]"><Btn className="w-[31px]">Mute</Btn><Btn className="w-[19px]">DC</Btn></div>
            </div>
        </Device>
    );
}

function RackButton({ label, d, tone = 'bg-[#3a3a43]', box = '0 0 8 8' }: { label: string; d: string; tone?: string; box?: string }) {
    return (
        <RoundButton label={label} className="size-[13px] text-[#1c1c21]" tone={tone}>
            <Icon box={box} className="size-2" d={d} />
        </RoundButton>
    );
}

function MasterRack() {
    return (
        <Device
            title="Maste…"
            width="w-[130px]"
            extra={
                <>
                    <RoundButton label="Randomize" className="size-[13px] text-[9px]">R</RoundButton>
                    <RoundButton label="Map" className="w-[9px] h-[13px] text-[9px]" round="">M</RoundButton>
                </>
            }
        >
            <div className="w-full flex border-2 border-t-0 border-[#43434d]">
                <div className="w-[18px] flex flex-col items-center gap-1 pt-1">
                    <RackButton label="Macros" d={macros} tone="bg-[#ff5c80]" box="0 0 10 10" />
                    <RoundButton label="Add macro" className="size-3">+</RoundButton>
                    <RoundButton label="Remove macro" className="size-3">−</RoundButton>
                    <RackButton label="Variations" d={variations} />
                    <RackButton label="Devices" d={devicesIcon} />
                    <RackButton label="Chains" d={chains} />
                </div>
                <div className="relative ml-[2px] mt-[5px] mb-[3px] w-[101px] rounded-[4px] border border-[#151518] overflow-hidden">
                    <div className="h-[28px] bg-[#26ffa8] text-[#0d2f25] text-center leading-[11px] pt-[2px]">Build<br />Up</div>
                    <span className="absolute left-[3px] top-[66px] size-[5px] rounded-full bg-[#62ffa6] border border-[#151518]" />
                    <div className="flex flex-col items-center pt-[38px]">
                        <svg viewBox="0 0 40 36" className="w-10 h-9" fill="none" stroke="#131316" strokeWidth="2"><path d="M11 35a18 18 0 1 1 18 0M18 22l-8 13" /></svg>
                        <span className="leading-3 mt-1">0</span>
                    </div>
                </div>
            </div>
        </Device>
    );
}

function Plugin({ title, off, ring, arrows = true, boxed = 'bg-[#27272f]' }: { title: string; off?: boolean; ring?: boolean; arrows?: boolean; boxed?: string }) {
    return (
        <Device title={title} width="w-[150px]" off={off} fold wrench>
            <div className="flex-1 pt-2 px-[5px]">
                <div className="h-[140px] rounded-[3px] bg-[#202025] flex items-end">
                    {ring && <span className="w-[13px] h-[13px] rounded-full border-2 border-[#f05a80]" />}
                </div>
                <div className="flex gap-1 mt-[5px]">
                    <Pick label={`${title} X`} value="none" className={clsx('flex-1', boxed)} arrow={arrows} />
                    <Pick label={`${title} Y`} value="none" className={clsx('flex-1', boxed)} arrow={arrows} />
                </div>
            </div>
        </Device>
    );
}

function Limiter() {
    return (
        <Device title="Limiter" width="w-[115px]">
            <div className="w-[61px] pl-[7px] pt-[6px]">
                <div className="w-12"><Knob label="Gain" value="0.00 dB" center /></div>
                <span className="block leading-3 mt-2">Lookahead</span>
                <Pick label="Lookahead" value="3 ms" className="bg-[#1c1c21] w-[52px] mt-px" />
                <div className="w-12 mt-[11px]"><Knob label="Release" value="300 ms" at={95} faded /></div>
                <Btn on className="w-12">Auto</Btn>
            </div>
            <div className="w-[48px] pt-[6px]">
                <span className="block leading-3">Ceiling</span>
                <Btn className="w-full">0.00 dB</Btn>
                <Btn on className="w-full mt-1">Stereo</Btn>
                <div className="flex justify-between mt-[7px] pl-[18px]">
                    <span className="w-2 h-[100px] mt-[6px] bg-[#1b1b1f]" />
                    <ul className="text-right leading-[14px]">
                        {['0', '-6', '-12', '-18', '-24', '-30', '-36', '-42'].map(v => <li key={v}>{v}</li>)}
                    </ul>
                </div>
            </div>
        </Device>
    );
}

function ChainMeter() {
    return (
        <div className="w-[11px] shrink-0 flex justify-center items-center gap-[2px]">
            <span className="w-[2px] h-10 bg-[#202024]" /><span className="w-[2px] h-10 bg-[#202024]" />
        </div>
    );
}

function DeviceView() {
    return (
        <div className="flex gap-2 h-[196px] mt-2 shrink-0">
            <section className="w-[200px] shrink-0 bg-[#151518] rounded-md p-1">
                <div className="h-full bg-[#27272f]">
                    <h2 className="h-[17px] bg-[#3e3e47] pl-1 leading-[17px]">信息页</h2>
                    <div className="pl-[5px] pt-[3px] leading-[15px] whitespace-nowrap">
                        <p>当鼠标悬停在界面某处时，信息页会给出<br />该位置的简要说明。有些参数还支持自定<br />义信息文本。</p>
                        <p>为节省视窗空间，单击左下角三角形按钮<br />可以隐藏信息页。</p>
                        <p className="mt-[15px]">[?] 显示隐藏「信息页」</p>
                    </div>
                </div>
            </section>
            <section className="flex-1 min-w-0 bg-[#151518] rounded-md rounded-br-none py-1 pr-[3px] flex">
                <div className="w-4 shrink-0 flex justify-center items-center gap-[2px]">
                    <span className="w-[2px] h-10 bg-[#202024]" /><span className="w-[2px] h-10 bg-[#202024]" />
                </div>
                <div className="flex gap-[2px] shrink-0">
                    <div className="w-[20px] rounded-l-[4px] bg-[#27272f] border-l-2 border-b-2 border-[#43434d] flex flex-col items-center overflow-hidden">
                        <div className="w-full h-[17px] bg-[#43434d] flex items-center shrink-0 pl-px">
                            <button type="button" aria-label="Rack on" className="relative size-3 rounded-full bg-[#62ffa6]">
                                <span className="absolute -left-px -top-px size-[5px] rounded-full bg-[#c8c8cc] border border-[#151518]" />
                            </button>
                        </div>
                        <div className="flex flex-col gap-1 pt-1 items-center">
                            <RackButton label="Macros" d={macros} box="0 0 10 10" />
                            <RackButton label="Variations" d={variations} />
                            <RackButton label="Devices" d={devicesIcon} tone="bg-[#ff5c80]" />
                            <RackButton label="Chains" d={chains} />
                        </div>
                        <h3 className="flex-1 font-bold [writing-mode:vertical-rl] rotate-180 leading-3 whitespace-nowrap pt-1">Audio Eff…</h3>
                        <div className="flex flex-col gap-1 pb-[3px]"><HeadButton label="Hot-swap" d={swap} /><HeadButton label="Save preset" d={save} filled /></div>
                    </div>
                    <AutoFilter curve="M0 39l2-2h4c12 8 18 14 32 15.500s20 1 40 1h122" ring={[6, 64]} shape={1} freq="26.0 Hz" res="49 %" freqAt={-150} resAt={-30} />
                    <AutoFilter curve="M0 53.500h150c20 .5 28 1 35 5s12 16 15 30" ring={[193, 100]} shape={0} freq="19.9 kHz" res="0.6 %" freqAt={150} resAt={-150} />
                    <Saturator />
                    <Utility racked />
                    <div className="w-[18px] rounded-r-[4px] bg-[#27272f] border-r-2 border-b-2 border-[#43434d] overflow-hidden"><div className="h-[17px] bg-[#43434d]" /></div>
                </div>
                <ChainMeter />
                <MasterRack />
                <ChainMeter />
                <Utility />
                <ChainMeter />
                <Plugin title="MiniMeter…" ring arrows={false} />
                <ChainMeter />
                <Limiter />
                <ChainMeter />
                <Plugin title="LoudMax" ring boxed="bg-[#1c1c21]" />
                <ChainMeter />
                <Plugin title="SoundID …" off />
                <ChainMeter />
                <div className="flex-1 bg-[#27272f] flex items-center justify-center whitespace-nowrap">在这里加载音频效果器</div>
            </section>
        </div>
    );
}

function MiniChain() {
    const widths = [10, 35, 35, 18, 12, 0, 10, 0, 11, 0, 13, 0, 9, 0, 13, 0, 13];
    return (
        <div className="flex-1 h-4 flex gap-px text-[#4a5557]">
            {widths.map((w, i) => w === 0 ? <span key={i} className="w-px" /> : (
                <span key={i} className="h-full bg-[#202125] border-t-2 border-[#35353d]" style={{ flexGrow: w, flexBasis: 0 }}>
                    {i === 6 && <span className="block h-1 bg-[#26ffa8]" />}
                    {i !== 6 && i < 13 && (
                        <svg viewBox="0 0 12 12" preserveAspectRatio="none" className="block w-full h-[13px] opacity-70" fill="none" stroke="currentColor">
                            <path d="M1 2h2M5 3h1M9 2h2M2 5h1M6 6h3M1 9h2M5 9h1M9 10h2" />
                        </svg>
                    )}
                </span>
            ))}
        </div>
    );
}

function StatusBar() {
    const up = <svg viewBox="0 0 10 11" className="w-[10px] h-[11px] fill-[#27272f]"><path d="M5 0l5 11H0z" /></svg>;
    return (
        <footer className="relative h-[37px] shrink-0 flex items-start">
            <div className="pt-[9px]"><RoundButton label="Toggle info view">{up}</RoundButton></div>
            <div className="flex-1 mt-2 ml-2 h-[21px] rounded-[3px] border-[3px] border-[#151518] bg-[#26262e]" />
            <div className="w-[206px] mt-2 ml-[9px] h-[21px] rounded-[3px] border-[3px] border-[#151518] bg-[#26262e]" />
            <div className="w-[229px] ml-2 h-[29px] rounded-b-[3px] bg-[#151518] flex items-center gap-1 pl-1 pr-[3px] pt-[9px] pb-1">
                <span className="font-bold text-[#d0d0d4]">Master</span>
                <MiniChain />
            </div>
            <div className="pt-[9px] pl-2"><RoundButton label="Toggle device view">{up}</RoundButton></div>
            <svg viewBox="0 0 6 8" className="absolute -right-[7px] bottom-0 w-[6px] h-2" fill="#ff5c80"><path d="M0 0h6v1H0zM0 8h3V5zM3 4l3-2v3z" /></svg>
        </footer>
    );
}

export default function App() {
    return (
        <div className="min-h-screen flex flex-col bg-[#1f1e24] pl-2 pr-[7px] text-[10px] text-[#c0c0c4] font-['DejaVu_Sans','Noto_Sans_CJK_SC',sans-serif]">
            <TopBar />
            <div className="flex-1 flex gap-2">
                <Browser />
                <Arrangement />
            </div>
            <DeviceView />
            <StatusBar />
        </div>
    );
}
